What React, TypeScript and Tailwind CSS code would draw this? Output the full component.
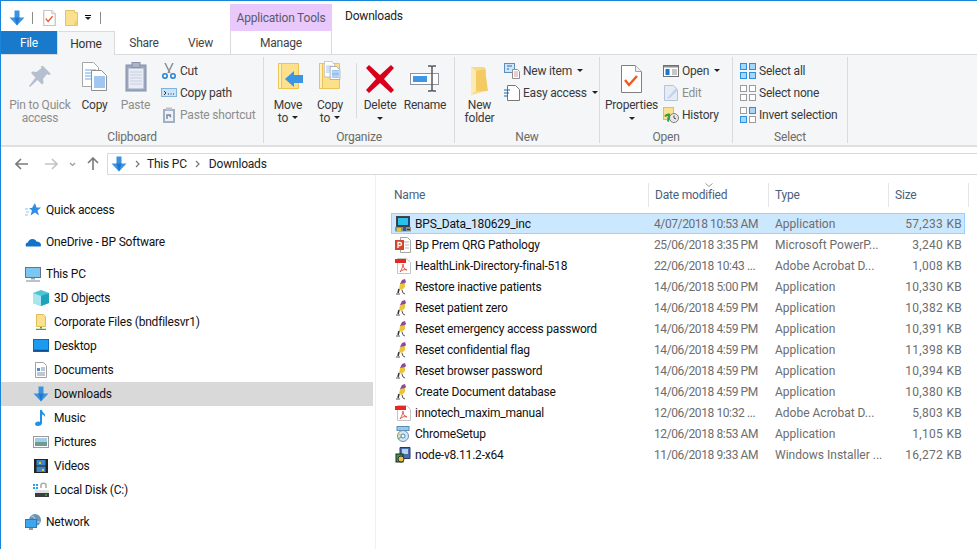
import React from "react";

const DownArrow = ({ s = 16 }: { s?: number }) => (
  <svg width={s} height={s} viewBox="0 0 16 16" className="shrink-0">
    <path d="M5.5 0.5h5v7h5l-7.5 8-7.500-8h5z" fill="#3b93e0" />
    <path d="M5.500 7.500h5l-2.500 8z" fill="#1e78d2" />
  </svg>
);
const PropsPage = ({ s = 13, h = 16 }: { s?: number; h?: number }) => (
  <svg width={s} height={h} viewBox="0 0 21 28" className="shrink-0">
    <path d="M.5.5h14l6 6v21H.5z" fill="#fff" stroke="#7f7f7f" />
    <path d="M14.5.5v6h6" fill="#eee" stroke="#a5a5a5" />
    <path d="M4 15l4 5 8-9" fill="none" stroke="#ee5a1e" strokeWidth="2.4" />
  </svg>
);
const FolderSmall = () => (
  <svg width="13" height="16" viewBox="0 0 13 16" className="shrink-0">
    <path d="M.5.5h9v2h3v13H.5z" fill="#fbe08e" stroke="#e5c365" />
    <path d="M10 11h2.500v4.500H9z" fill="#f2cf6d" />
  </svg>
);
const BigFolder = ({ children }: { children?: React.ReactNode }) => (
  <svg width="32" height="30" viewBox="0 0 32 30" className="shrink-0">
    <path d="M5.500 1.500h20v25h-20z" fill="#fde08b" stroke="#edc454" />
    <path d="M5.500 1.500h3v25h-3z" fill="#fff0c0" stroke="#edc454" />
    {children}
  </svg>
);
const CopyDocs = () => (
  <svg width="26" height="30" viewBox="0 0 26 30" className="shrink-0">
    <path d="M.5.500h11l5 5v19H.5z" fill="#fff" stroke="#a6a6a6" />
    <path d="M3 8h11M3 11h11M3 14h11M3 17h6" stroke="#6ca7e6" />
    <path d="M9.500 8.500h10l5 5v15H9.500z" fill="#fff" stroke="#8f8f8f" />
    <path d="M12 15h11M12 17h11M12 19h11M12 21h11M12 23h11M12 25h11" stroke="#3f8fe4" />
  </svg>
);
const Clipboard = () => (
  <svg width="22" height="30" viewBox="0 0 22 30" className="shrink-0">
    <rect x="1" y="3" width="20" height="26" fill="#9aa7bd" stroke="#8592aa" />
    <rect x="3.500" y="6.500" width="15" height="20" fill="#e9edf5" />
    <path d="M5 10h12M5 13h12M5 16h12M5 19h12M5 22h12" stroke="#c5cfe0" />
    <rect x="7" y="0.500" width="8" height="5" fill="#a9b4c7" stroke="#8592aa" />
  </svg>
);
const Pin = () => (
  <svg width="24" height="24" viewBox="0 0 24 24" className="shrink-0">
    <path d="M15 1l8 8-2 1-2-1-4 5 .5 4-1.500 1.500-4.500-4.500L2 22 1 21l6.500-8.500L3 8l1.500-1.500 4 .5 5-4-.5-2z" fill="#b5bfd0" />
  </svg>
);
const Scissors = () => (
  <svg width="16" height="16" viewBox="0 0 16 16" className="shrink-0">
    <path d="M4 0l5 10M12 0L7 10" stroke="#8a8f97" strokeWidth="1.500" />
    <circle cx="4" cy="13" r="2.200" fill="none" stroke="#1f7fd6" strokeWidth="1.500" />
    <circle cx="12" cy="13" r="2.200" fill="none" stroke="#1f7fd6" strokeWidth="1.500" />
  </svg>
);
const CopyPath = () => (
  <svg width="16" height="16" viewBox="0 0 16 16" className="shrink-0">
    <rect x=".5" y="3.500" width="15" height="8" fill="#c9e3f7" stroke="#7fb2dc" />
    <path d="M3 6l2 2-2 2M7 9h1M9.500 9h1M12 9h1" stroke="#333" fill="none" />
  </svg>
);
const PasteShort = () => (
  <svg width="16" height="16" viewBox="0 0 16 16" className="shrink-0">
    <rect x="2" y="2" width="12" height="14" fill="#a2aec2" />
    <rect x="4" y="4" width="8" height="10" fill="#eef1f6" />
    <rect x="5" y="0.500" width="6" height="3" fill="#b9c2d2" />
    <path d="M6 12V8h4M8 8l2 2" stroke="#7a88a0" fill="none" strokeWidth="1.500" />
  </svg>
);
const BigX = () => (
  <svg width="28" height="28" viewBox="0 0 28 28" className="shrink-0">
    <path d="M3 0l11 10L25 0l3 3-10 11 10 11-3 3-11-10L3 28l-3-3 10-11L0 3z" fill="#d8001c" />
  </svg>
);
const RenameIcon = () => (
  <svg width="30" height="28" viewBox="0 0 30 28" className="shrink-0">
    <rect x=".5" y="8.500" width="28" height="11" fill="#fff" stroke="#8f949c" />
    <rect x="3" y="11" width="14" height="6" fill="#3d96e6" />
    <path d="M18 1h3l1 1 1-1h3M18 26h3l1-1 1 1h3M22 2v23" stroke="#54585e" strokeWidth="1.500" fill="none" />
  </svg>
);
const NewFolderIcon = () => (
  <svg width="20" height="28" viewBox="0 0 20 28" className="shrink-0">
    <path d="M1 0h13l2 2v22l-15 4z" fill="#f9da84" />
    <path d="M1 0l5 4v20l-5 4z" fill="#fdeab3" />
    <path d="M6 4l9-2 3 22H6z" fill="#f3cb62" />
  </svg>
);
const NewItem = () => (
  <svg width="16" height="16" viewBox="0 0 16 16" className="shrink-0">
    <rect x=".5" y=".5" width="10" height="9" fill="#cfe6f8" stroke="#5a8fc0" />
    <path d="M3 3h5M3 6h2" stroke="#2b6ea8" />
    <path d="M8.500 6.500h5l2 2v7h-7z" fill="#fff" stroke="#8e8e8e" />
    <path d="M10 9h4M10 11h4M10 13h4" stroke="#e09a9a" />
  </svg>
);
const EasyAccess = () => (
  <svg width="16" height="16" viewBox="0 0 16 16" className="shrink-0">
    <path d="M3.500.5h8l4 4v11h-12z" fill="#fff" stroke="#777" />
    <path d="M0 5h6M0 8h5M0 11h4" stroke="#1a66b0" />
  </svg>
);
const OpenIcon = () => (
  <svg width="16" height="16" viewBox="0 0 16 16" className="shrink-0">
    <rect x=".5" y="2.500" width="15" height="11" fill="#fff" stroke="#707070" />
    <rect x="1" y="3" width="14" height="1.500" fill="#8f8f8f" />
    <rect x="2.500" y="6" width="4" height="6" fill="#1d74d0" />
    <path d="M9 7h5M9 9h5M9 11h5" stroke="#8f8f8f" />
  </svg>
);
const EditIcon = () => (
  <svg width="16" height="16" viewBox="0 0 16 16" className="shrink-0">
    <path d="M1.500.5h9l4 4v11h-13z" fill="#e6ecf6" stroke="#b4c3dc" />
    <path d="M5 12L13 3l2 2-8 8-3 1z" fill="#c5d3ea" />
  </svg>
);
const HistoryIcon = () => (
  <svg width="16" height="16" viewBox="0 0 16 16" className="shrink-0">
    <rect x=".5" y=".5" width="10" height="12" fill="#fbe08e" stroke="#e3be55" />
    <circle cx="11" cy="11" r="4.500" fill="#e8e8e8" stroke="#7e7e7e" />
    <path d="M11 8.500V11l2 1" stroke="#444" fill="none" />
    <path d="M2 9.500a4 4 0 014-2l-1 7" stroke="#2d9f3b" strokeWidth="2" fill="none" />
  </svg>
);
const SelectIcon = ({ on }: { on: boolean[] }) => (
  <svg width="16" height="16" viewBox="0 0 16 16" className="shrink-0">
    {[[0, 0], [9, 0], [0, 9], [9, 9]].map(([x, y], i) => (
      <rect key={i} x={x + 0.5} y={y + 0.5} width="6" height="6" fill={on[i] ? "#a9d6f7" : "#fff"} stroke={on[i] ? "#2d8fe0" : "#9c9c9c"} />
    ))}
  </svg>
);
const Caret = () => <span className="inline-block w-0 h-0 border-x-[3px] border-x-transparent border-t-[3px] border-t-[#222] align-middle" />;

const Large = ({ icon, l1, l2, w, disabled, caretUnder, caretInline }: { icon: React.ReactNode; l1: string; l2?: string; w: string; disabled?: boolean; caretUnder?: boolean; caretInline?: boolean }) => (
  <div className={`${w} flex flex-col items-center pt-[5px] shrink-0 text-center leading-[13px] ${disabled ? "text-[#8d8d8d]" : "text-[#3a3a3a]"}`}>
    <div className="h-[33px] flex items-start justify-center">{icon}</div>
    <div className="mt-[4px] whitespace-nowrap">{l1}</div>
    {l2 && <div className="whitespace-nowrap">{l2}{caretInline && <span className="ml-[4px] relative top-[-1px]"><Caret /></span>}</div>}
    {caretUnder && <div className="h-[13px] flex items-center"><Caret /></div>}
  </div>
);
const Small = ({ icon, t, disabled, caret }: { icon: React.ReactNode; t: string; disabled?: boolean; caret?: boolean }) => (
  <div className={`h-[22px] flex items-center whitespace-nowrap ${disabled ? "text-[#8d8d8d]" : "text-[#3a3a3a]"}`}>
    <span className="w-[19px] flex shrink-0">{icon}</span>
    <span>{t}</span>
    {caret && <span className="ml-[5px] relative top-[-1px] flex"><Caret /></span>}
  </div>
);
const Group = ({ w, label, children }: { w: string; label: string; children: React.ReactNode }) => (
  <div className={`${w} shrink-0 flex flex-col border-r border-[#dadbdc] my-[2px]`}>
    <div className="h-[75px] shrink-0 flex">{children}</div>
    <div className="h-[11px] shrink-0 flex items-center justify-center text-[#6b6b6b] leading-[13px]">{label}</div>
  </div>
);

const Star = () => (
  <svg width="16" height="16" viewBox="0 0 16 16"><path d="M10 1l1.500 4.500H16l-3.500 3 1.500 5-4-3-4.500 3 1.500-5L4 6h3z" fill="#2c8fe3" /><path d="M0 7h3M1 10h3M0 13h3" stroke="#8cc4ee" /></svg>
);
const Cloud = () => (
  <svg width="16" height="16" viewBox="0 0 16 16"><path d="M1 12.500c-1-2 0-4 2-4 .5-2 2-3.500 4.500-3.500 2 0 3.500 1 4 2.500 2.500 0 4.500 1.500 4.500 3.500 0 1-.5 1.500-1 1.500z" fill="#1172c8" /></svg>
);
const Monitor = () => (
  <svg width="16" height="16" viewBox="0 0 16 16"><rect x=".5" y="1.500" width="15" height="10" fill="#7cc6f2" stroke="#64748a" /><path d="M6 12h4v1.500H6z" fill="#9aa5b2" /><path d="M1 15h14" stroke="#a6aeb8" strokeWidth="1.500" /></svg>
);
const Cube = () => (
  <svg width="16" height="16" viewBox="0 0 16 16"><path d="M8 0l8 3v10l-8 3-8-3V3z" fill="#4cc4d6" /><path d="M0 3l8 3v10l-8-3z" fill="#a7e6ee" /><path d="M8 6l8-3v10l-8 3z" fill="#1ea3bb" /></svg>
);
const NetFolder = () => (
  <svg width="16" height="16" viewBox="0 0 16 16"><path d="M3.500.5h7l2 2v10h-9z" fill="#fbe08e" stroke="#e0bd58" /><path d="M8 13v1.500" stroke="#3fa73f" strokeWidth="2" /><path d="M3 15.500h10" stroke="#3fa73f" strokeWidth="1.500" /></svg>
);
const Desk = () => (
  <svg width="16" height="16" viewBox="0 0 16 16"><rect x=".5" y="1.500" width="15" height="12" fill="#1c9bf0" stroke="#1469b3" /><path d="M1 12.500h14" stroke="#0b4f8c" strokeWidth="1.500" /></svg>
);
const Docs = () => (
  <svg width="16" height="16" viewBox="0 0 16 16"><path d="M2.500.5h8l3 3v12h-11z" fill="#fff" stroke="#a1a1a1" /><path d="M4 6h3v3H4z" fill="#4b8fd0" /><path d="M8 6h4M8 8h4M4 11h8M4 13h8" stroke="#7c8ea6" /></svg>
);
const Note = () => (
  <svg width="16" height="16" viewBox="0 0 16 16"><path d="M7 0h2c0 3 4 3 3 7-.5-1.500-2-2.500-3-2.500V13c0 2-2 3-4 3s-3-1-3-2c0-2 3-3 5-2z" fill="#1d92e8" /></svg>
);
const Pic = () => (
  <svg width="16" height="16" viewBox="0 0 16 16"><rect x=".5" y="2.500" width="15" height="11" fill="#fff" stroke="#9a9a9a" /><rect x="2" y="4" width="12" height="4" fill="#a6cde8" /><rect x="2" y="8" width="12" height="4" fill="#6e9c92" /></svg>
);
const Film = () => (
  <svg width="16" height="16" viewBox="0 0 16 16"><rect x="1" y="1" width="14" height="14" fill="#222" /><rect x="3.500" y="2" width="9" height="5.500" fill="#3b87c8" /><rect x="3.500" y="8.500" width="9" height="5.500" fill="#3b87c8" /><path d="M6 4h2v2H6zM9 11h2v2H9z" fill="#f0c030" /></svg>
);
const Disk = () => (
  <svg width="16" height="16" viewBox="0 0 16 16"><path d="M0 2h2v2H0zM3 2h2v2H3zM0 5h2v2H0zM3 5h2v2H3z" fill="#1fa2ee" /><path d="M8 6V3c0-2.500 5-2.500 5 0v3" fill="none" stroke="#a8a8a8" strokeWidth="1.500" /><rect x="2" y="8" width="14" height="3" fill="#dfe1e3" /><rect x="2" y="11" width="14" height="4" fill="#3b3d40" /><rect x="12" y="12.500" width="2" height="1" fill="#3fe03f" /></svg>
);
const Net = () => (
  <svg width="16" height="16" viewBox="0 0 16 16"><circle cx="10" cy="6" r="6" fill="#6d93b8" /><path d="M6 2c3 0 4 2 4 4s3 2 5 2" fill="none" stroke="#b7dcf2" /><rect x=".5" y="5.500" width="11" height="8" fill="#3da7ec" stroke="#2a7bbd" /><path d="M4 15h4" stroke="#6a7a8c" strokeWidth="1.500" /></svg>
);

const ExeBps = () => (
  <svg width="16" height="16" viewBox="0 0 16 16"><rect x="1.500" y=".5" width="13" height="10" fill="#16418f" stroke="#444" /><rect x="3" y="2" width="10" height="7" fill="#29c0ea" /><path d="M0 11h16v4.500H0z" fill="#8a8f8a" /><path d="M2 12h4v3H2z" fill="#e2c640" /><path d="M8 11h3v4H8z" fill="#2557b5" /><path d="M12 13h3v1h-3z" fill="#333" /></svg>
);
const Ppt = () => (
  <svg width="16" height="16" viewBox="0 0 16 16"><path d="M5.500.5h7l3 3v12h-10z" fill="#fff" stroke="#a5a5a5" /><path d="M9 5h5M10 8h4M10 11h4" stroke="#b7b7b7" /><rect x="0" y="3" width="9" height="10" fill="#d2472a" /><path d="M3 11V5.500h2a1.500 1.500 0 010 3H3" stroke="#fff" fill="none" strokeWidth="1.300" /></svg>
);
const Pdf = () => (
  <svg width="16" height="16" viewBox="0 0 16 16"><path d="M2.500.5h9l4 4v11h-13z" fill="#fff" stroke="#c4c4c4" /><rect x="0" y="1" width="11" height="4" fill="#e22a20" /><path d="M5 14c2-3 3-6 3-8 0 3 1 5 4 6-3-1-5 0-7 2z" fill="none" stroke="#e2574c" /></svg>
);
const Feather = () => (
  <svg width="16" height="16" viewBox="0 0 16 16"><path d="M7 1l3-1 1 3-3 3-3-1z" fill="#8c4a9e" /><path d="M5 5l5-1 0 4-3 3-3-1z" fill="#eac53c" /><path d="M4 10l-1 4" stroke="#333" strokeWidth="1.500" /><path d="M1 15h4M7 11l1 3 2 1" stroke="#555" fill="none" /></svg>
);
const Chrome = () => (
  <svg width="16" height="16" viewBox="0 0 16 16"><rect x="2" y=".5" width="12" height="4" fill="#9cc7e6" stroke="#5c8db5" /><circle cx="8" cy="10" r="5.500" fill="#d5e6f2" stroke="#6e93b0" /><circle cx="8" cy="10" r="2" fill="#fff" stroke="#3d8bd0" /><path d="M3 8l3 1M10 12l2 2" stroke="#e5b93a" /><path d="M3 13l3-2" stroke="#4aa84a" /></svg>
);
const Msi = () => (
  <svg width="16" height="16" viewBox="0 0 16 16"><path d="M5 .5h10v11H5z" fill="#4a6fb0" stroke="#263a63" /><rect x="7" y="2" width="6" height="5" fill="#b6d1ee" /><rect x="1" y="7" width="7" height="8" fill="#3a9c4a" stroke="#222" /><circle cx="6" cy="12" r="3" fill="#e3c43e" stroke="#333" /></svg>
);

const nav: { t: string; i: React.ReactNode; lvl: number; gap?: boolean; sel?: boolean }[] = [
  { t: "Quick access", i: <Star />, lvl: 0 },
  { t: "OneDrive - BP Software", i: <Cloud />, lvl: 0, gap: true },
  { t: "This PC", i: <Monitor />, lvl: 0, gap: true },
  { t: "3D Objects", i: <Cube />, lvl: 1 },
  { t: "Corporate Files (bndfilesvr1)", i: <NetFolder />, lvl: 1 },
  { t: "Desktop", i: <Desk />, lvl: 1 },
  { t: "Documents", i: <Docs />, lvl: 1 },
  { t: "Downloads", i: <DownArrow />, lvl: 1, sel: true },
  { t: "Music", i: <Note />, lvl: 1 },
  { t: "Pictures", i: <Pic />, lvl: 1 },
  { t: "Videos", i: <Film />, lvl: 1 },
  { t: "Local Disk (C:)", i: <Disk />, lvl: 1 },
  { t: "Network", i: <Net />, lvl: 0, gap: true },
];

const files: [string, React.ReactNode, string, string, string][] = [
  ["BPS_Data_180629_inc", <ExeBps />, "4/07/2018 10:53 AM", "Application", "57,233 KB"],
  ["Bp Prem QRG Pathology", <Ppt />, "25/06/2018 3:35 PM", "Microsoft PowerP...", "3,240 KB"],
  ["HealthLink-Directory-final-518", <Pdf />, "22/06/2018 10:43 ...", "Adobe Acrobat D...", "1,008 KB"],
  ["Restore inactive patients", <Feather />, "14/06/2018 5:00 PM", "Application", "10,330 KB"],
  ["Reset patient zero", <Feather />, "14/06/2018 4:59 PM", "Application", "10,382 KB"],
  ["Reset emergency access password", <Feather />, "14/06/2018 4:59 PM", "Application", "10,391 KB"],
  ["Reset confidential flag", <Feather />, "14/06/2018 4:59 PM", "Application", "11,398 KB"],
  ["Reset browser password", <Feather />, "14/06/2018 4:59 PM", "Application", "10,394 KB"],
  ["Create Document database", <Feather />, "14/06/2018 4:59 PM", "Application", "10,380 KB"],
  ["innotech_maxim_manual", <Pdf />, "12/06/2018 10:32 ...", "Adobe Acrobat D...", "5,803 KB"],
  ["ChromeSetup", <Chrome />, "12/06/2018 8:53 AM", "Application", "1,105 KB"],
  ["node-v8.11.2-x64", <Msi />, "11/06/2018 9:33 AM", "Windows Installer ...", "16,272 KB"],
];

const Chevron = () => (
  <svg width="5" height="8" viewBox="0 0 5 8" className="shrink-0"><path d="M1 1l3 3-3 3" fill="none" stroke="#777" strokeWidth="1.200" /></svg>
);

export default function App() {
  return (
    <div className="w-[977px] h-[549px] overflow-hidden bg-white border-t border-l border-[#1a86d9] flex flex-col text-[12px] tracking-[-0.2px] text-black [font-family:Roboto,'Noto_Sans',sans-serif]">
      <div className="h-[30px] flex shrink-0">
        <div className="w-[229px] flex items-center pl-[8px] pt-[3px]">
          <DownArrow />
          <span className="w-px h-[12px] bg-[#8a8a8a] ml-[7px]" />
          <span className="ml-[10px] flex"><PropsPage /></span>
          <span className="ml-[9px] flex"><FolderSmall /></span>
          <span className="ml-[7px] flex flex-col items-center gap-[1px]"><span className="w-[6px] h-px bg-black" /><Caret /></span>
          <span className="w-px h-[12px] bg-[#8a8a8a] ml-[9px]" />
        </div>
        <div className="w-[102px] mt-[3px] bg-[#e9c8fb] text-[#5a5a6a] flex items-center justify-center">Application Tools</div>
        <div className="pl-[13px] pt-[6px] leading-[18px] text-[#222]">Downloads</div>
      </div>
      <div className="h-[24px] flex shrink-0 border-b border-[#dadbdc] text-[#444]">
        <div className="w-[56px] h-[23px] bg-[#1979ca] text-white flex items-center justify-center">File</div>
        <div className="w-[58px] h-[24px] bg-[#f5f6f7] border-x border-t border-[#dadbdc] flex items-center justify-center text-[#333]">Home</div>
        <div className="w-[58px] flex items-center justify-center">Share</div>
        <div className="w-[25px] ml-[15px] flex items-center justify-center">View</div>
        <div className="w-[102px] ml-[17px] border-x border-[#dadbdc] flex items-center justify-center">Manage</div>
      </div>
      <div className="h-[92px] bg-[#f5f6f7] border-b-2 border-[#dfe0e1] flex shrink-0">
        <Group w="w-[263px]" label="Clipboard">
          <Large w="w-[78px]" icon={<span className="pt-[3px] block"><Pin /></span>} l1="Pin to Quick" l2="access" disabled />
          <Large w="w-[31px]" icon={<CopyDocs />} l1="Copy" />
          <Large w="w-[51px]" icon={<Clipboard />} l1="Paste" disabled />
          <div className="pt-[3px]">
            <Small icon={<Scissors />} t="Cut" />
            <Small icon={<CopyPath />} t="Copy path" />
            <Small icon={<PasteShort />} t="Paste shortcut" disabled />
          </div>
        </Group>
        <Group w="w-[191px]" label="Organize">
          <Large w="w-[48px]" icon={<span className="block ml-[1px]"><BigFolder><path d="M12 17l9-8v4h9v8h-9v4z" fill="#3a95e4" /></BigFolder></span>} l1="Move" l2="to" caretInline />
          <Large w="w-[36px]" icon={<span className="relative block"><BigFolder /><span className="absolute top-[-1px] left-[10px] scale-[0.65] origin-top-left block"><CopyDocs /></span></span>} l1="Copy" l2="to" caretInline />
          <div className="w-px h-[55px] bg-[#dadbdc] mt-[6px] ml-[8px]" />
          <Large w="w-[46px]" icon={<span className="pt-[3px] block"><BigX /></span>} l1="Delete" caretUnder />
          <Large w="w-[44px]" icon={<span className="pt-[3px] block"><RenameIcon /></span>} l1="Rename" />
        </Group>
        <Group w="w-[145px]" label="New">
          <Large w="w-[49px]" icon={<span className="pt-[5px] block"><NewFolderIcon /></span>} l1="New" l2="folder" />
          <div className="pt-[3px]">
            <Small icon={<NewItem />} t="New item" caret />
            <Small icon={<EasyAccess />} t="Easy access" caret />
          </div>
        </Group>
        <Group w="w-[133px]" label="Open">
          <Large w="w-[63px]" icon={<span className="pt-[3px] block"><PropsPage s={21} h={28} /></span>} l1="Properties" caretUnder />
          <div className="pt-[3px]">
            <Small icon={<OpenIcon />} t="Open" caret />
            <Small icon={<EditIcon />} t="Edit" disabled />
            <Small icon={<HistoryIcon />} t="History" />
          </div>
        </Group>
        <Group w="w-[115px]" label="Select">
          <div className="pt-[3px] pl-[7px]">
            <Small icon={<SelectIcon on={[true, true, true, true]} />} t="Select all" />
            <Small icon={<SelectIcon on={[false, false, false, false]} />} t="Select none" />
            <Small icon={<SelectIcon on={[false, true, true, false]} />} t="Invert selection" />
          </div>
        </Group>
      </div>
      <div className="h-[28px] flex shrink-0 items-end">
        <div className="w-[106px] h-[22px] flex items-center pl-[14px] shrink-0">
          <svg width="14" height="12" viewBox="0 0 14 12"><path d="M6 1L1 6l5 5M1 6h12" fill="none" stroke="#7a7a7a" strokeWidth="1.600" /></svg>
          <svg width="14" height="12" viewBox="0 0 14 12" className="ml-[15px]"><path d="M8 1l5 5-5 5M13 6H1" fill="none" stroke="#c4c4c4" strokeWidth="1.600" /></svg>
          <svg width="7" height="5" viewBox="0 0 7 5" className="ml-[11px]"><path d="M1 1l2.500 2.500L6 1" fill="none" stroke="#999" strokeWidth="1.200" /></svg>
          <svg width="12" height="14" viewBox="0 0 12 14" className="ml-[11px]"><path d="M1 6l5-5 5 5M6 1v12" fill="none" stroke="#7a7a7a" strokeWidth="1.600" /></svg>
        </div>
        <div className="flex-1 h-[22px] border-y border-l border-[#d9d9d9] flex items-center pl-[3px] text-[#222]">
          <DownArrow />
          <span className="ml-[8px]"><Chevron /></span>
          <span className="ml-[7px]">This PC</span>
          <span className="ml-[8px]"><Chevron /></span>
          <span className="ml-[9px]">Downloads</span>
        </div>
      </div>
      <div className="flex-1 flex min-h-0">
        <div className="w-[372px] shrink-0 pt-[23px]">
          {nav.map((n) => (
            <div key={n.t} className={`h-[24px] flex items-center whitespace-nowrap ${n.gap ? "mt-[8px]" : ""} ${n.lvl ? "pl-[32px]" : "pl-[24px]"} ${n.sel ? "bg-[#d9d9d9]" : ""}`}>
              <span className="w-[21px] flex shrink-0">{n.i}</span>
              <span className="text-[#111]">{n.t}</span>
            </div>
          ))}
        </div>
        <div className="w-[3px] shrink-0 border-r border-[#f0f0f0]" />
        <div className="flex-1 min-w-0 flex flex-col pl-[15px]">
          <div className="h-[24px] mt-[8px] flex text-[#4c607a] relative">
            <div className="w-[258px] pl-[3px] flex items-center border-r border-[#e5e5e5]">Name</div>
            <div className="w-[120px] pl-[6px] flex items-center border-r border-[#e5e5e5]">Date modified</div>
            <div className="w-[120px] pl-[6px] flex items-center border-r border-[#e5e5e5]">Type</div>
            <div className="w-[80px] pl-[6px] flex items-center border-r border-[#e5e5e5]">Size</div>
            <svg width="8" height="4" viewBox="0 0 8 4" className="absolute left-[314px] top-0"><path d="M.5.5L4 3.500 7.500.5" fill="none" stroke="#9a9a9a" /></svg>
          </div>
          <div className="mt-[6px]">
            {files.map(([n, i, d, t, s], idx) => (
              <div key={n} className={`w-[574px] h-[21px] flex items-center border ${idx === 0 ? "bg-[#cce8ff] border-[#99d1ff]" : "border-transparent"}`}>
                <span className="w-[23px] pl-[3px] flex shrink-0">{i}</span>
                <span className="w-[239px] shrink-0 whitespace-nowrap overflow-hidden text-[#111]">{n}</span>
                <span className="w-[120px] shrink-0 whitespace-nowrap tracking-[-0.4px] text-[#6d6d6d]">{d}</span>
                <span className="w-[110px] pl-px shrink-0 whitespace-nowrap tracking-normal text-[#6d6d6d]">{t}</span>
                <span className="w-[78px] shrink-0 whitespace-nowrap text-right tracking-[0.3px] text-[#6d6d6d]">{s}</span>
              </div>
            ))}
          </div>
        </div>
      </div>
    </div>
  );
}
